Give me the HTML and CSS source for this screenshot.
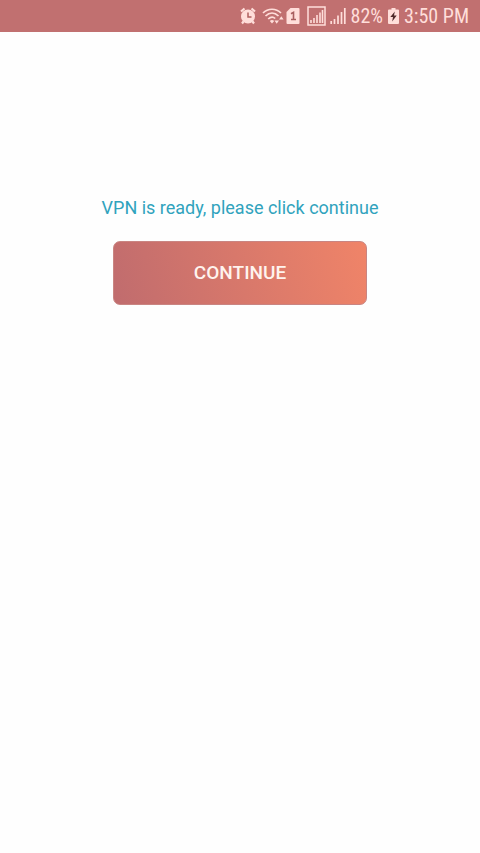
FILE: index.html
```
<!DOCTYPE html>
<html lang="en">
<head>
    <meta charset="UTF-8">
    <meta name="viewport" content="width=device-width, initial-scale=1.0">
    <title>VPN</title>
    <link rel="stylesheet" href="styles.css">
</head>
<body>
    <header class="status-bar">
        <svg class="alarm" width="16" height="18" viewBox="0 0 16 18" aria-label="Alarm">
            <path d="M1 4.5L4.5 1.5M15 4.5L11.5 1.5M3.5 14.5L2 16.5M12.5 14.5L14 16.5" stroke="#ffdeda" stroke-width="2.2"/>
            <circle cx="8" cy="9.5" r="7" fill="#ffdeda"/>
            <path d="M8 5.5V10H11.5" fill="none" stroke="#b0605f" stroke-width="1.5"/>
        </svg>
        <svg class="wifi" width="22" height="18" viewBox="0 0 22 18" aria-label="Wi-Fi">
            <g fill="none" stroke="#ffdeda" stroke-width="1.7">
                <path d="M1 6C6 1 14 1 19 6"/>
                <path d="M3.5 9C7.5 5 12.5 5 16.5 9"/>
                <path d="M6.2 12C8.8 9.6 11.2 9.6 13.2 11.5"/>
            </g>
            <path d="M7.8 14Q10 12.2 12.2 14L10 16.5Z" fill="#ffdeda"/>
            <path d="M12.5 13.5H17L14.7 16.8ZM17 12.5L19.3 9.2L21.6 12.5Z" fill="#ffdeda"/>
        </svg>
        <svg class="sim" width="14" height="18" viewBox="0 0 14 18" aria-label="SIM 1">
            <path d="M4.5 1H12.5Q13.5 1 13.5 2V16Q13.5 17 12.5 17H1.5Q0.5 17 0.5 16V5Z" fill="#ffdeda"/>
            <path d="M5 6.8L7.5 5.3V12.5M5 12.5H10" fill="none" stroke="#a95f5f" stroke-width="1.6"/>
        </svg>
        <svg class="signal-box" width="19" height="20" viewBox="0 0 19 20" aria-label="Signal">
            <rect x="1" y="1" width="17" height="18" fill="none" stroke="#ffdeda" stroke-width="1.5"/>
            <path d="M4 17V14M7 17V12M10 17V9M13 17V6.5M15.5 17V4" stroke="#ffdeda" stroke-width="1.6"/>
        </svg>
        <svg class="signal" width="16" height="18" viewBox="0 0 16 18" aria-label="Signal">
            <path d="M1.2 17V14M4.5 17V12M8 17V8.5M11.5 17V5M14.8 17V1" stroke="#ffdeda" stroke-width="1.7"/>
        </svg>
        <span class="percent">82%</span>
        <svg class="battery" width="11" height="18" viewBox="0 0 11 18" aria-label="Charging">
            <path d="M3.5 1H7.5V2.5H10Q11 2.5 11 3.5V16Q11 17 10 17H1Q0 17 0 16V3.5Q0 2.5 1 2.5H3.5Z" fill="#ffdeda"/>
            <path d="M6.8 4.5L2.3 10H5L4.2 14.5L8.7 8.5H6Z" fill="#4f2b2b"/>
        </svg>
        <time class="time">3:50 PM</time>
    </header>

    <main class="container">
        <p class="message">VPN is ready, please click continue</p>
        <button class="continue-button" type="button">CONTINUE</button>
    </main>
</body>
</html>
```
FILE: styles.css
```
body {
    font-family: "Roboto", Arial, sans-serif;
    background-color: #fefefe;
    margin: 0;
}
.status-bar {
    display: flex;
    justify-content: flex-end;
    align-items: center;
    height: 32px;
    padding-right: 11px;
    background-color: #c17070;
    color: #ffdeda;
    font-family: "Roboto Condensed", "Roboto", sans-serif;
    font-size: 20px;
    white-space: nowrap;
}
.wifi {
    margin-left: 6px;
}
.sim {
    margin-left: 2px;
}
.signal-box {
    margin-left: 7px;
}
.signal {
    margin-left: 4px;
}
.percent,
.battery,
.time {
    margin-left: 5px;
}
.container {
    display: flex;
    flex-direction: column;
    align-items: center;
    padding: 164px 20px 20px;
}
.message {
    margin: 0;
    color: #30a3bd;
    font-size: 18px;
    line-height: 24px;
    text-align: center;
}
.continue-button {
    width: 100%;
    max-width: 254px;
    margin-top: 21px;
    padding: 19px;
    border: 1px solid #c98582;
    border-radius: 7px;
    background: linear-gradient(75deg, #c06c6e, #f08468) border-box;
    color: #fff3ee;
    font-family: inherit;
    font-size: 19px;
    font-weight: 500;
    line-height: 24px;
    cursor: pointer;
}
```
